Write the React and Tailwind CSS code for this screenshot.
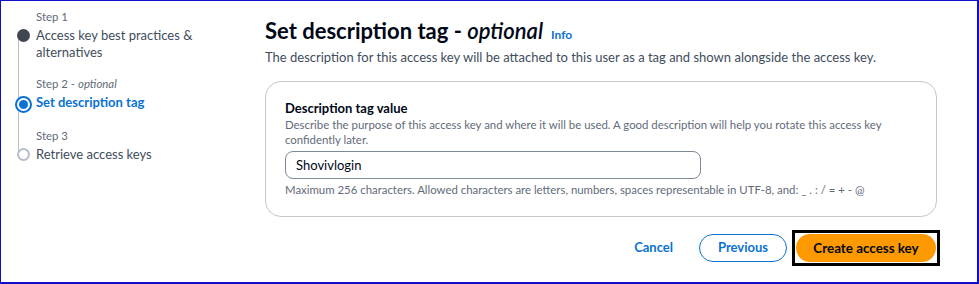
import React from 'react';

const font = { fontFamily: 'Lato, "Open Sans", Arial, sans-serif' };

const steps = [
    { label: 'Step 1', title: 'Access key best practices & alternatives', state: 'done' },
    { label: 'Step 2', optional: true, title: 'Set description tag', state: 'current' },
    { label: 'Step 3', title: 'Retrieve access keys', state: 'todo' },
];

const StepMarker = ({ state }) => {
    if (state === 'done') return <span className="block w-[13px] h-[13px] rounded-full bg-[#414750]" />;
    if (state === 'current') {
        return (
            <span className="flex items-center justify-center w-[17px] h-[17px] rounded-full border-[2px] border-[#0972d3] bg-white">
                <span className="block w-[9px] h-[9px] rounded-full bg-[#0972d3]" />
            </span>
        );
    }
    return <span className="block w-[13px] h-[13px] rounded-full border-[2px] border-[#b6bec9] bg-white" />;
};

const Steps = () => (
    <div className="w-[250px] shrink-0 pl-[10px] pt-[8px] relative">
        <div className="absolute left-[17px] top-[36px] h-[118px] w-px bg-[#b6bec9]" />
        {steps.map((s, i) => (
            <div key={i} className="relative mb-[15px]">
                <div className="pl-[25px] text-[11.4px] leading-[16px] text-[#5f6b7a]">
                    {s.label}{s.optional && <> - <i>optional</i></>}
                </div>
                <div className="flex items-start mt-[2px]">
                    <div className="w-[25px] flex justify-center pt-[2px]">
                        <StepMarker state={s.state} />
                    </div>
                    <div className={`text-[13px] leading-[17px] w-[170px] ${s.state === 'current' ? 'font-bold text-[#0972d3]' : 'text-[#414d5c]'}`}>
                        {s.title}
                    </div>
                </div>
            </div>
        ))}
    </div>
);

export default function App() {
    return (
        <div style={font} className="w-[979px] h-[284px] bg-white border-t border-l border-r-2 border-b-2 border-[#1010c8] flex">
            <Steps />
            <div className="pl-[14px] pt-[16px] w-[686px] shrink-0">
                <div className="flex items-baseline gap-[8px]">
                    <h1 className="text-[22px] leading-[28px] font-bold text-[#000716]">
                        Set description tag - <i className="font-semibold">optional</i>
                    </h1>
                    <a className="text-[12px] font-bold text-[#0972d3]">Info</a>
                </div>
                <p className="text-[13px] leading-[20px] text-[#414d5c] mt-[2px]">
                    The description for this access key will be attached to this user as a tag and shown alongside the access key.
                </p>
                <div className="mt-[14px] border border-[#c6c6cd] rounded-[16px] px-[19px] pt-[17px] pb-[18px]">
                    <div className="text-[13px] leading-[18px] font-bold text-[#000716]">Description tag value</div>
                    <div className="text-[11.4px] leading-[15px] text-[#5f6b7a] w-[600px]">
                        Describe the purpose of this access key and where it will be used. A good description will help you rotate this access key confidently later.
                    </div>
                    <input
                        readOnly
                        value="Shovivlogin"
                        className="mt-[4px] w-[416px] h-[28px] border border-[#7d8998] rounded-[8px] px-[10px] text-[13px] text-[#000716] outline-none"
                        style={font}
                    />
                    <div className="mt-[3px] text-[11.4px] leading-[16px] text-[#5f6b7a]">
                        Maximum 256 characters. Allowed characters are letters, numbers, spaces representable in UTF-8, and: _ . : / = + - @
                    </div>
                </div>
                <div className="flex justify-end items-center mt-[13px] mr-[-3px]">
                    <button className="text-[13px] font-bold text-[#0972d3] mr-[26px]">Cancel</button>
                    <button className="h-[28px] w-[88px] rounded-full border border-[#0972d3] text-[13px] font-bold text-[#0972d3] mr-[5px]">Previous</button>
                    <div className="border-[3px] border-black p-[1px]">
                        <button className="h-[28px] w-[140px] rounded-full bg-[#ff9900] text-[13.4px] font-bold text-[#000716]">Create access key</button>
                    </div>
                </div>
            </div>
        </div>
    );
}
